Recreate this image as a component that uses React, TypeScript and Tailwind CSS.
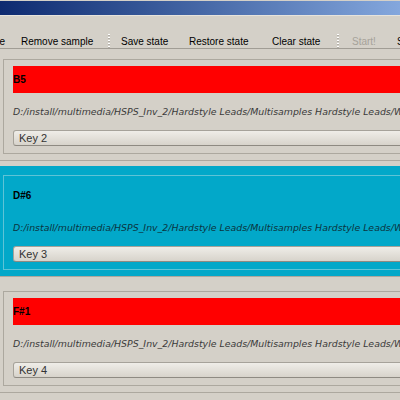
import React from 'react'

interface Sample {
    note: string
    key: string
    selected?: boolean
}

const samples: Sample[] = [
    { note: 'B5', key: 'Key 2' },
    { note: 'D#6', key: 'Key 3', selected: true },
    { note: 'F#1', key: 'Key 4' },
]

const path = 'D:/install/multimedia/HSPS_Inv_2/Hardstyle Leads/Multisamples Hardstyle Leads/Wav/lead.wav'

function Grip() {
    return (
        <svg width="3" height="16" viewBox="0 0 3 16" className="block">
            {[0, 3, 6, 9, 12].map(y => (
                <g key={y}>
                    <rect x="0" y={y} width="2" height="1" fill="#ffffff" />
                    <rect x="0" y={y + 1} width="2" height="1" fill="#b4b0a8" />
                </g>
            ))}
        </svg>
    )
}

function ToolButton({ label, w, disabled }: { label: string; w: string; disabled?: boolean }) {
    return (
        <div className={`${w} shrink-0 pl-[7px] whitespace-nowrap ${disabled ? 'text-[#a6a29a]' : 'text-black'}`}>
            {label}
        </div>
    )
}

function SampleRow({ s }: { s: Sample }) {
    return (
        <div>
            <div className={`h-[110px] pt-[9px] pl-[3px] ${s.selected ? 'bg-[#02a8c9]' : ''}`}>
                <div className={`w-[420px] h-[95px] border pt-[6px] pl-[9px] ${s.selected ? 'border-[#5ec3d6]' : 'border-[#aca89f]'}`}>
                    <div className={`h-[27px] leading-[28px] text-[10px] font-bold text-black whitespace-nowrap ${s.selected ? '' : 'bg-[#ff0000]'}`}>
                        {s.note}
                    </div>
                    <div className={`mt-[13px] h-[12px] leading-[12px] text-[9.4px] italic whitespace-nowrap font-['DejaVu_Sans',sans-serif] ${s.selected ? 'text-[#0b3440]' : 'text-[#3a3a3a]'}`}>
                        {path}
                    </div>
                    <div className="mt-[12px] h-[16px] rounded-[3px] border border-[#a6a29a] border-b-[#8e8a82] bg-linear-to-b from-[#efede8] to-[#d7d3cb] pl-[5px] leading-[14px] text-[11px] text-[#333333]">
                        {s.key}
                    </div>
                </div>
            </div>
            <div className="h-[6px] border-t border-[#aca89f]" />
        </div>
    )
}

export default function App() {
    return (
        <div className="w-[400px] h-[400px] overflow-hidden bg-[#d4d0c8] font-['Liberation_Sans',Arial,sans-serif]">
            <div className="mt-[1px] h-[14px] bg-linear-to-r from-[#0e2a70] to-[#84a7dd]" />
            <div className="h-[15px] border-t border-[#e6e3dc]" />

            {/* toolbar */}
            <div className="h-[19px] pt-[5px] flex items-center text-[10px] border-b border-[#a19d95]">
                <div className="w-[14px] shrink-0 flex justify-end overflow-hidden">
                    <span className="shrink-0 whitespace-nowrap pr-[9px]">Add sample</span>
                </div>
                <ToolButton label="Remove sample" w="w-[90px]" />
                <div className="w-[10px] shrink-0 flex justify-center"><Grip /></div>
                <ToolButton label="Save state" w="w-[68px]" />
                <ToolButton label="Restore state" w="w-[83px]" />
                <ToolButton label="Clear state" w="w-[66px]" />
                <div className="w-[14px] shrink-0 flex justify-center"><Grip /></div>
                <ToolButton label="Start!" w="w-[45px]" disabled />
                <ToolButton label="Stop!" w="w-[50px]" />
            </div>

            <div className="pt-[1px]">
                {samples.map(s => (
                    <SampleRow key={s.note} s={s} />
                ))}
            </div>
        </div>
    )
}
